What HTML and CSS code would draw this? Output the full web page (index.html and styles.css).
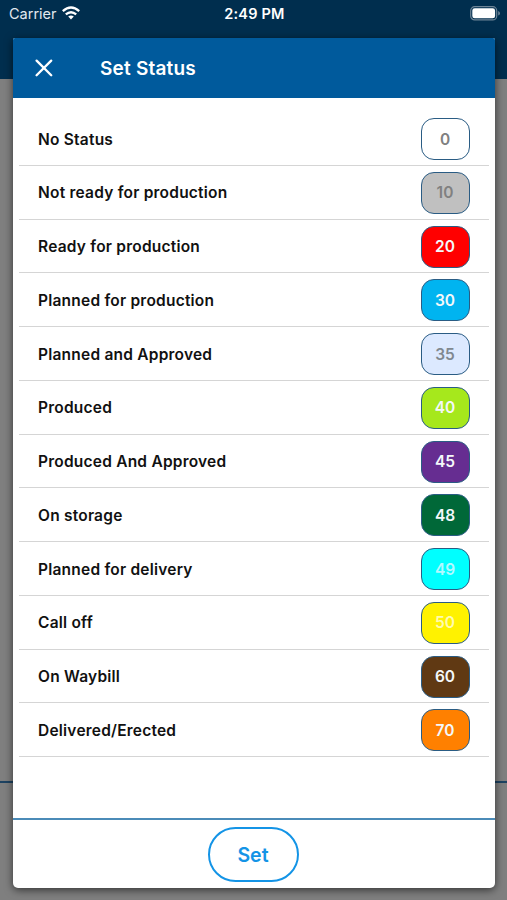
FILE: index.html
```html
<!DOCTYPE html>
<html lang="en">
<head>
<meta charset="utf-8">
<title>Set Status</title>
<link rel="stylesheet" href="styles.css">
</head>
<body>
<div class="screen">
  <header class="statusbar">
    <div class="carrier"><span>Carrier</span>
      <svg class="wifi" width="18" height="14" viewBox="0 0 18 14" fill="none" stroke="#fff" stroke-width="2.3"><path d="M.8 5.1Q9-2.1 17.2 5.1"/><path d="M3.8 8.4Q9 4 14.2 8.4"/><path d="M6.2 10.6Q9 8.2 11.8 10.6L9 13.6Z" fill="#fff" stroke="none"/></svg>
    </div>
    <div class="time">2:49 PM</div>
    <svg class="battery" width="31" height="15" viewBox="0 0 31 15"><rect x=".7" y=".7" width="26" height="13.2" rx="4" fill="none" stroke="#6d8496" stroke-width="1.2"/><rect x="2.3" y="2.3" width="22.8" height="10" rx="2.4" fill="#fff"/><path d="M28.2 5Q30 5.7 30 7.3T28.2 9.6Z" fill="#6d8496"/></svg>
  </header>
  <div class="backdrop"></div>
  <footer class="backdrop-foot"></footer>
  <main class="modal">
    <div class="titlebar">
      <svg class="close" width="18" height="18" viewBox="0 0 18 18" fill="none" stroke="#fff" stroke-width="2.3" stroke-linecap="round"><path d="M1.6 1.6 16.2 16.2M16.2 1.6 1.6 16.2"/></svg>
      <h1>Set Status</h1>
    </div>
    <ul class="list">
      <li><span>No Status</span><b class="badge s0">0</b></li>
      <li><span>Not ready for production</span><b class="badge s10">10</b></li>
      <li><span>Ready for production</span><b class="badge s20">20</b></li>
      <li><span>Planned for production</span><b class="badge s30">30</b></li>
      <li><span>Planned and Approved</span><b class="badge s35">35</b></li>
      <li><span>Produced</span><b class="badge s40">40</b></li>
      <li><span>Produced And Approved</span><b class="badge s45">45</b></li>
      <li><span>On storage</span><b class="badge s48">48</b></li>
      <li><span>Planned for delivery</span><b class="badge s49">49</b></li>
      <li><span>Call off</span><b class="badge s50">50</b></li>
      <li><span>On Waybill</span><b class="badge s60">60</b></li>
      <li><span>Delivered/Erected</span><b class="badge s70">70</b></li>
    </ul>
    <div class="actions"><button class="set">Set</button></div>
  </main>
</div>
</body>
</html>
```
FILE: styles.css
```css
* { box-sizing: border-box; }
body { margin: 0; font-family: Inter, "Liberation Sans", sans-serif; }
.screen { position: relative; width: 507px; height: 900px; overflow: hidden; display: flex; flex-direction: column; background: #7f7f7f; }
.statusbar { height: 79px; flex: none; background: #002e4e; color: #fff; display: grid; grid-template-columns: 1fr auto 1fr; align-items: start; padding: 6px 6px 0 8px; }
.carrier { display: flex; gap: 6px; padding-left: 1px; font-size: 14.5px; line-height: 16px; color: #e2e9ee; letter-spacing: 0; }
.wifi { margin-left: -1px; }
.time { font-size: 14.5px; line-height: 16px; font-weight: 600; letter-spacing: .2px; }
.battery { justify-self: end; }
.backdrop { flex: 1; }
.backdrop-foot { height: 119px; flex: none; border-top: 2px solid #1d4261; }
.modal { position: absolute; left: 13px; top: 38px; width: 482px; height: 850px; border-radius: 2px 2px 5px 5px; overflow: hidden; background: #fff; box-shadow: 0 2px 9px rgba(0,0,0,.6); display: flex; flex-direction: column; }
.titlebar { height: 60px; flex: none; background: #005a9c; color: #fff; display: flex; align-items: center; padding-left: 22px; gap: 47px; }
h1 { margin: 0; padding-top: 1px; font-size: 19px; line-height: 24px; font-weight: 600; letter-spacing: .2px; }
.list { list-style: none; margin: 0; padding: 14px 6px 0; flex: 1; }
.list li { height: 53.75px; border-bottom: 1.5px solid #d5d5d5; display: flex; align-items: center; justify-content: space-between; padding: 1.5px 19px 0 19px; color: #111; font-size: 15.5px; font-weight: 600; letter-spacing: .22px; }
.badge { width: 49px; height: 42px; border: 1.5px solid #2a5c84; border-radius: 13px; display: flex; align-items: center; justify-content: center; padding-right: 1px; font-size: 15.5px; font-weight: 600; letter-spacing: 0; color: #f4f8fa; }
.s0 { background: #fff; color: #808080; }
.s10 { background: #c0c0c0; color: #808080; }
.s20 { background: #f00; }
.s30 { background: #00b4f0; }
.s35 { background: #dce9ff; color: #808890; }
.s40 { background: #a6e81c; }
.s45 { background: #662d91; }
.s48 { background: #006838; }
.s49 { background: #0ff; color: #b4f8ff; }
.s50 { background: #fff200; color: #fffbb0; }
.s60 { background: #603913; }
.s70 { background: #ff8000; }
.actions { height: 70px; flex: none; border-top: 2px solid #4b8bb8; display: flex; justify-content: center; align-items: center; padding-right: 2px; }
.set { width: 91px; height: 55px; border: 2px solid #1494e6; border-radius: 28px; background: #fff; color: #1494e6; font: 600 19.5px Inter, "Liberation Sans", sans-serif; padding: 1px 0 0; }
```
